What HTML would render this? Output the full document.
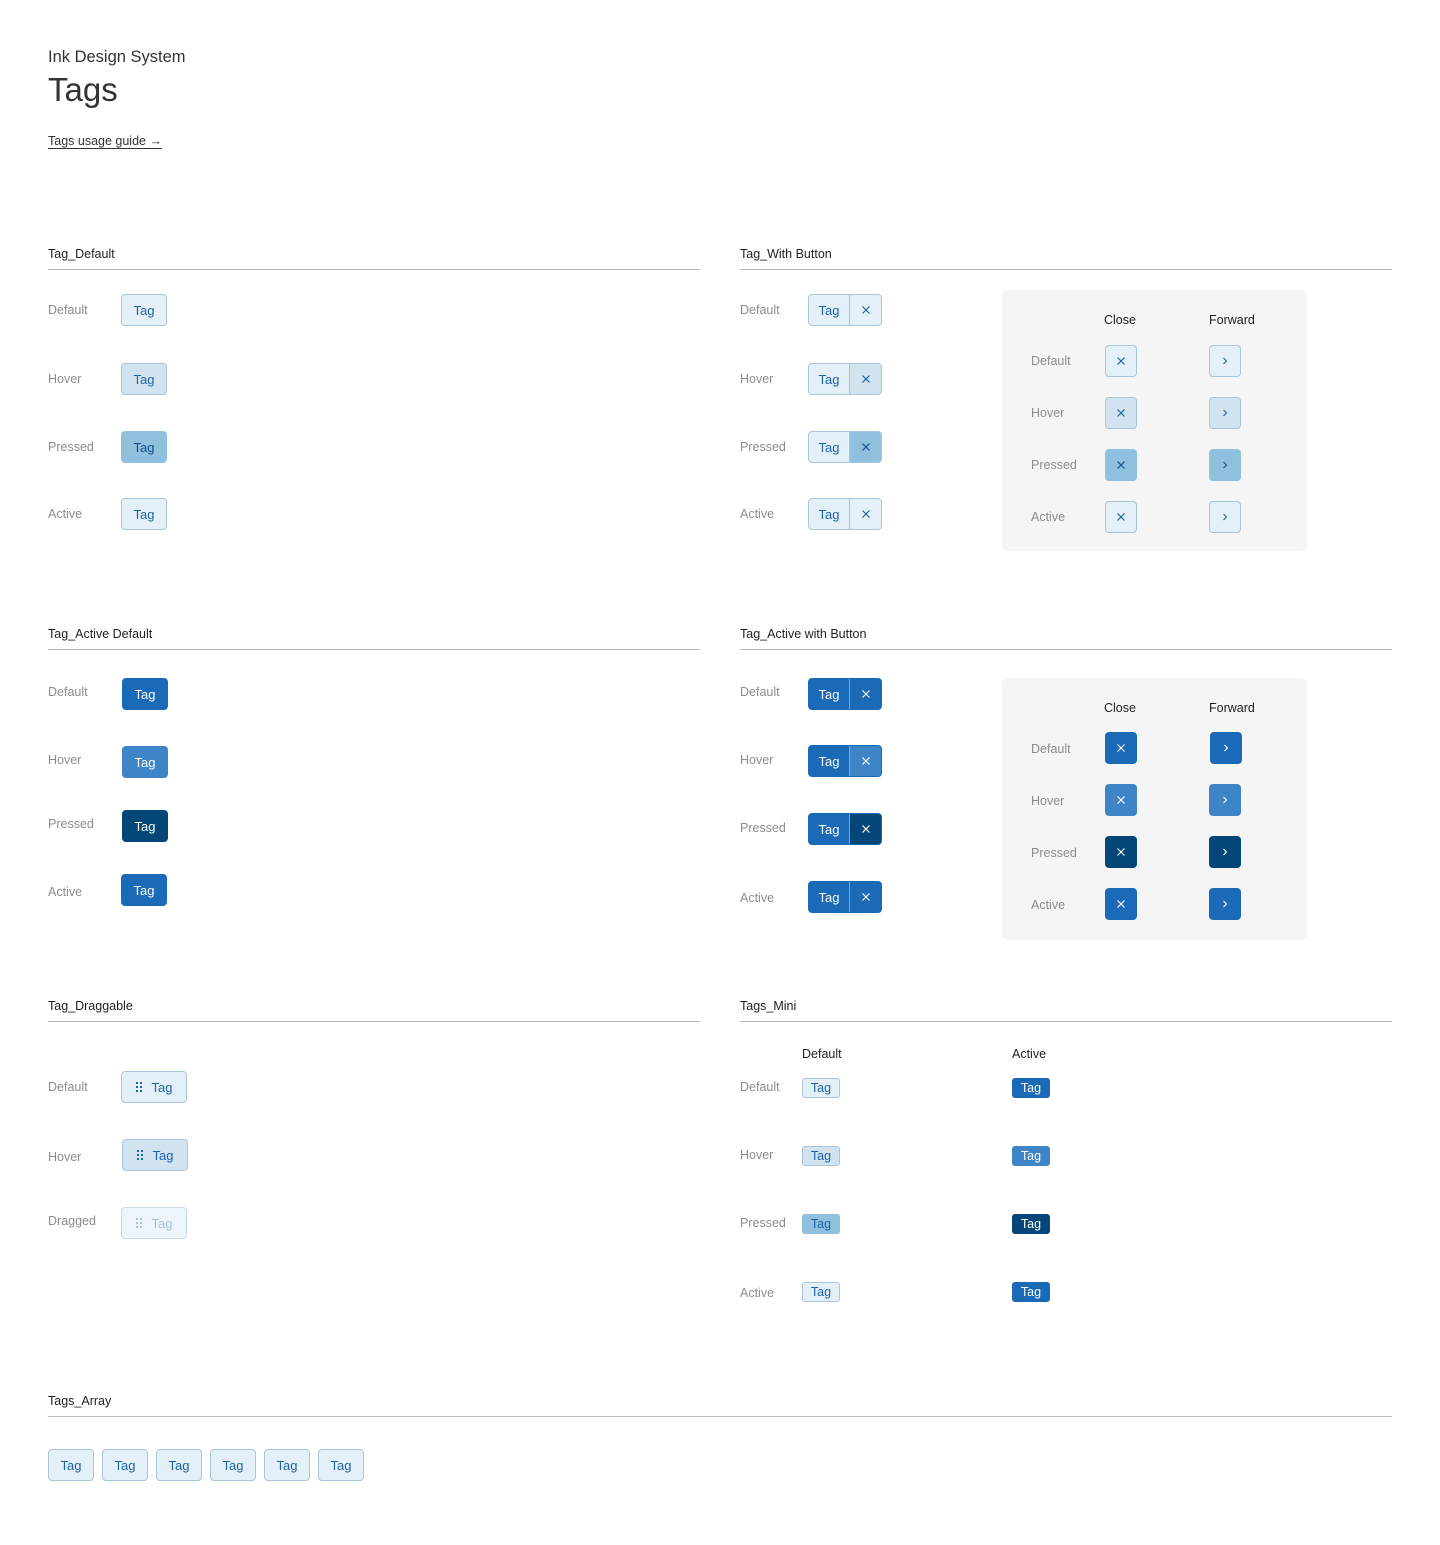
<!DOCTYPE html>
<html><head><meta charset="utf-8"><style>
*{margin:0;padding:0;box-sizing:border-box}
body{width:1440px;height:1545px;background:#fff;font-family:"Liberation Sans",sans-serif;position:relative;overflow:hidden}
.a{position:absolute}
.lbl{position:absolute;font-size:12.5px;color:#8c8c8c;line-height:16px}
.h{position:absolute;font-size:12.5px;color:#1f1f1f;line-height:16px}
.ln{position:absolute;height:1px;background:#bdbdbd}
.t{position:absolute;height:32px;border-radius:4px;border:1px solid #a9c6d8;background:#e4f0f7;color:#1d63a6;font-size:13px;display:flex;align-items:center;justify-content:center;line-height:1}
.t.hv{background:#d0e3ef}
.t.pr{background:#8fc0de;border-color:#8fc0de;color:#124f86}
.t.b{background:#1b6ab8;border-color:#1b6ab8;color:#fff}
.t.b.hv{background:#3d85c7;border-color:#3d85c7}
.t.b.pr{background:#044677;border-color:#044677;color:#fff}
.wb{position:absolute;height:32px;width:74px;border-radius:4px;border:1px solid #a9c6d8;background:#e4f0f7;display:flex;overflow:hidden;color:#1d63a6;font-size:13px}
.wb span{display:flex;align-items:center;justify-content:center;height:100%}
.wb .l{width:41px;border-right:1px solid #a9c6d8}
.wb .r{flex:1}
.wb.bb{background:#1b6ab8;border-color:#1b6ab8;color:#fff}
.wb.bb .l{border-right-color:#7aa9d6}
.ib{position:absolute;width:32px;height:32px;border-radius:4px;border:1px solid #a9c6d8;background:#e4f0f7;display:flex;align-items:center;justify-content:center}
.panel{position:absolute;background:#f5f5f5;border-radius:6px;width:305px}
.mini{position:absolute;height:20px;width:38px;border-radius:3px;border:1px solid #a9c6d8;background:#e4f0f7;color:#1d63a6;font-size:12.5px;display:flex;align-items:center;justify-content:center}
</style></head><body>
<div class="a" style="left:48px;top:48px;font-size:16.5px;color:#333">Ink Design System</div>
<div class="a" style="left:48px;top:71px;font-size:33px;color:#333">Tags</div>
<div class="a" style="left:48px;top:134px;font-size:12.5px;color:#333;text-decoration:underline;text-underline-offset:3px">Tags usage guide →</div>

<div class="h" style="left:48px;top:246px">Tag_Default</div><div class="ln" style="left:48px;top:269px;width:652px"></div>
<div class="h" style="left:740px;top:246px">Tag_With Button</div><div class="ln" style="left:740px;top:269px;width:652px"></div>
<div class="h" style="left:48px;top:626px">Tag_Active Default</div><div class="ln" style="left:48px;top:649px;width:652px"></div>
<div class="h" style="left:740px;top:626px">Tag_Active with Button</div><div class="ln" style="left:740px;top:649px;width:652px"></div>
<div class="h" style="left:48px;top:998px">Tag_Draggable</div><div class="ln" style="left:48px;top:1021px;width:652px"></div>
<div class="h" style="left:740px;top:998px">Tags_Mini</div><div class="ln" style="left:740px;top:1021px;width:652px"></div>
<div class="h" style="left:48px;top:1393px">Tags_Array</div><div class="ln" style="left:48px;top:1416px;width:1344px"></div>

<div class="lbl" style="left:48px;top:302px">Default</div><div class="t" style="left:121px;top:294px;width:46px">Tag</div>
<div class="lbl" style="left:48px;top:371px">Hover</div><div class="t hv" style="left:121px;top:363px;width:46px">Tag</div>
<div class="lbl" style="left:48px;top:439px">Pressed</div><div class="t pr" style="left:121px;top:431px;width:46px">Tag</div>
<div class="lbl" style="left:48px;top:506px">Active</div><div class="t" style="left:121px;top:498px;width:46px">Tag</div>

<div class="lbl" style="left:740px;top:302px">Default</div>
<div class="wb" style="left:808px;top:294px"><span class="l">Tag</span><span class="r"><svg width="10" height="10" viewBox="0 0 10 10"><path d="M1.5 1.5l7 7M8.5 1.5l-7 7" stroke="#1d63a6" stroke-width="1.2"/></svg></span></div>
<div class="lbl" style="left:740px;top:371px">Hover</div>
<div class="wb" style="left:808px;top:363px"><span class="l">Tag</span><span class="r" style="background:#d0e3ef"><svg width="10" height="10" viewBox="0 0 10 10"><path d="M1.5 1.5l7 7M8.5 1.5l-7 7" stroke="#1d63a6" stroke-width="1.2"/></svg></span></div>
<div class="lbl" style="left:740px;top:439px">Pressed</div>
<div class="wb" style="left:808px;top:431px"><span class="l">Tag</span><span class="r" style="background:#8fc0de"><svg width="10" height="10" viewBox="0 0 10 10"><path d="M1.5 1.5l7 7M8.5 1.5l-7 7" stroke="#124f86" stroke-width="1.2"/></svg></span></div>
<div class="lbl" style="left:740px;top:506px">Active</div>
<div class="wb" style="left:808px;top:498px"><span class="l">Tag</span><span class="r"><svg width="10" height="10" viewBox="0 0 10 10"><path d="M1.5 1.5l7 7M8.5 1.5l-7 7" stroke="#1d63a6" stroke-width="1.2"/></svg></span></div>

<div class="panel" style="left:1002px;top:290px;height:261px"></div>
<div class="h" style="left:1104px;top:312px">Close</div><div class="h" style="left:1209px;top:312px">Forward</div>
<div class="lbl" style="left:1031px;top:353px">Default</div>
<div class="ib" style="left:1105px;top:345px"><svg width="10" height="10" viewBox="0 0 10 10"><path d="M1.5 1.5l7 7M8.5 1.5l-7 7" stroke="#1d63a6" stroke-width="1.2"/></svg></div>
<div class="ib" style="left:1209px;top:345px"><svg width="6" height="8" viewBox="0 0 6 8"><path d="M1.5 1l3 3-3 3" fill="none" stroke="#1d63a6" stroke-width="1.1"/></svg></div>
<div class="lbl" style="left:1031px;top:405px">Hover</div>
<div class="ib" style="left:1105px;top:397px;background:#d0e3ef"><svg width="10" height="10" viewBox="0 0 10 10"><path d="M1.5 1.5l7 7M8.5 1.5l-7 7" stroke="#1d63a6" stroke-width="1.2"/></svg></div>
<div class="ib" style="left:1209px;top:397px;background:#d0e3ef"><svg width="6" height="8" viewBox="0 0 6 8"><path d="M1.5 1l3 3-3 3" fill="none" stroke="#1d63a6" stroke-width="1.1"/></svg></div>
<div class="lbl" style="left:1031px;top:457px">Pressed</div>
<div class="ib" style="left:1105px;top:449px;background:#8fc0de;border-color:#8fc0de"><svg width="10" height="10" viewBox="0 0 10 10"><path d="M1.5 1.5l7 7M8.5 1.5l-7 7" stroke="#124f86" stroke-width="1.2"/></svg></div>
<div class="ib" style="left:1209px;top:449px;background:#8fc0de;border-color:#8fc0de"><svg width="6" height="8" viewBox="0 0 6 8"><path d="M1.5 1l3 3-3 3" fill="none" stroke="#124f86" stroke-width="1.1"/></svg></div>
<div class="lbl" style="left:1031px;top:509px">Active</div>
<div class="ib" style="left:1105px;top:501px"><svg width="10" height="10" viewBox="0 0 10 10"><path d="M1.5 1.5l7 7M8.5 1.5l-7 7" stroke="#1d63a6" stroke-width="1.2"/></svg></div>
<div class="ib" style="left:1209px;top:501px"><svg width="6" height="8" viewBox="0 0 6 8"><path d="M1.5 1l3 3-3 3" fill="none" stroke="#1d63a6" stroke-width="1.1"/></svg></div>

<div class="lbl" style="left:48px;top:684px">Default</div><div class="t b" style="left:122px;top:678px;width:46px">Tag</div>
<div class="lbl" style="left:48px;top:752px">Hover</div><div class="t b hv" style="left:122px;top:746px;width:46px">Tag</div>
<div class="lbl" style="left:48px;top:816px">Pressed</div><div class="t b pr" style="left:122px;top:810px;width:46px">Tag</div>
<div class="lbl" style="left:48px;top:884px">Active</div><div class="t b" style="left:121px;top:874px;width:46px">Tag</div>

<div class="lbl" style="left:740px;top:684px">Default</div>
<div class="wb bb" style="left:808px;top:678px"><span class="l">Tag</span><span class="r"><svg width="10" height="10" viewBox="0 0 10 10"><path d="M1.5 1.5l7 7M8.5 1.5l-7 7" stroke="#fff" stroke-width="1.2"/></svg></span></div>
<div class="lbl" style="left:740px;top:752px">Hover</div>
<div class="wb bb" style="left:808px;top:745px"><span class="l">Tag</span><span class="r" style="background:#3d85c7"><svg width="10" height="10" viewBox="0 0 10 10"><path d="M1.5 1.5l7 7M8.5 1.5l-7 7" stroke="#fff" stroke-width="1.2"/></svg></span></div>
<div class="lbl" style="left:740px;top:820px">Pressed</div>
<div class="wb bb" style="left:808px;top:813px"><span class="l">Tag</span><span class="r" style="background:#044677"><svg width="10" height="10" viewBox="0 0 10 10"><path d="M1.5 1.5l7 7M8.5 1.5l-7 7" stroke="#fff" stroke-width="1.2"/></svg></span></div>
<div class="lbl" style="left:740px;top:890px">Active</div>
<div class="wb bb" style="left:808px;top:881px"><span class="l">Tag</span><span class="r"><svg width="10" height="10" viewBox="0 0 10 10"><path d="M1.5 1.5l7 7M8.5 1.5l-7 7" stroke="#fff" stroke-width="1.2"/></svg></span></div>

<div class="panel" style="left:1002px;top:678px;height:262px"></div>
<div class="h" style="left:1104px;top:700px">Close</div><div class="h" style="left:1209px;top:700px">Forward</div>
<div class="lbl" style="left:1031px;top:741px">Default</div>
<div class="ib" style="left:1105px;top:732px;background:#1b6ab8;border-color:#1b6ab8"><svg width="10" height="10" viewBox="0 0 10 10"><path d="M1.5 1.5l7 7M8.5 1.5l-7 7" stroke="#fff" stroke-width="1.2"/></svg></div>
<div class="ib" style="left:1210px;top:732px;background:#1b6ab8;border-color:#1b6ab8"><svg width="6" height="8" viewBox="0 0 6 8"><path d="M1.5 1l3 3-3 3" fill="none" stroke="#fff" stroke-width="1.1"/></svg></div>
<div class="lbl" style="left:1031px;top:793px">Hover</div>
<div class="ib" style="left:1105px;top:784px;background:#3d85c7;border-color:#3d85c7"><svg width="10" height="10" viewBox="0 0 10 10"><path d="M1.5 1.5l7 7M8.5 1.5l-7 7" stroke="#fff" stroke-width="1.2"/></svg></div>
<div class="ib" style="left:1209px;top:784px;background:#3d85c7;border-color:#3d85c7"><svg width="6" height="8" viewBox="0 0 6 8"><path d="M1.5 1l3 3-3 3" fill="none" stroke="#fff" stroke-width="1.1"/></svg></div>
<div class="lbl" style="left:1031px;top:845px">Pressed</div>
<div class="ib" style="left:1105px;top:836px;background:#044677;border-color:#044677"><svg width="10" height="10" viewBox="0 0 10 10"><path d="M1.5 1.5l7 7M8.5 1.5l-7 7" stroke="#fff" stroke-width="1.2"/></svg></div>
<div class="ib" style="left:1209px;top:836px;background:#044677;border-color:#044677"><svg width="6" height="8" viewBox="0 0 6 8"><path d="M1.5 1l3 3-3 3" fill="none" stroke="#fff" stroke-width="1.1"/></svg></div>
<div class="lbl" style="left:1031px;top:897px">Active</div>
<div class="ib" style="left:1105px;top:888px;background:#1b6ab8;border-color:#1b6ab8"><svg width="10" height="10" viewBox="0 0 10 10"><path d="M1.5 1.5l7 7M8.5 1.5l-7 7" stroke="#fff" stroke-width="1.2"/></svg></div>
<div class="ib" style="left:1209px;top:888px;background:#1b6ab8;border-color:#1b6ab8"><svg width="6" height="8" viewBox="0 0 6 8"><path d="M1.5 1l3 3-3 3" fill="none" stroke="#fff" stroke-width="1.1"/></svg></div>

<div class="lbl" style="left:48px;top:1079px">Default</div>
<div class="t" style="left:121px;top:1071px;width:66px;gap:10px"><svg width="6" height="10" viewBox="0 0 6 10"><g fill="#1d63a6"><rect x="0" y="0" width="2" height="2"/><rect x="4" y="0" width="2" height="2"/><rect x="0" y="4" width="2" height="2"/><rect x="4" y="4" width="2" height="2"/><rect x="0" y="8" width="2" height="2"/><rect x="4" y="8" width="2" height="2"/></g></svg>Tag</div>
<div class="lbl" style="left:48px;top:1149px">Hover</div>
<div class="t hv" style="left:122px;top:1139px;width:66px;gap:10px"><svg width="6" height="10" viewBox="0 0 6 10"><g fill="#1d63a6"><rect x="0" y="0" width="2" height="2"/><rect x="4" y="0" width="2" height="2"/><rect x="0" y="4" width="2" height="2"/><rect x="4" y="4" width="2" height="2"/><rect x="0" y="8" width="2" height="2"/><rect x="4" y="8" width="2" height="2"/></g></svg>Tag</div>
<div class="lbl" style="left:48px;top:1213px">Dragged</div>
<div class="t" style="left:121px;top:1207px;width:66px;gap:10px;background:#eef5fa;border-color:#c8dbe7;color:#a6c3d9"><svg width="6" height="10" viewBox="0 0 6 10"><g fill="#a6c3d9"><rect x="0" y="0" width="2" height="2"/><rect x="4" y="0" width="2" height="2"/><rect x="0" y="4" width="2" height="2"/><rect x="4" y="4" width="2" height="2"/><rect x="0" y="8" width="2" height="2"/><rect x="4" y="8" width="2" height="2"/></g></svg>Tag</div>

<div class="h" style="left:802px;top:1046px">Default</div><div class="h" style="left:1012px;top:1046px">Active</div>
<div class="lbl" style="left:740px;top:1079px">Default</div>
<div class="mini" style="left:802px;top:1078px">Tag</div>
<div class="mini" style="left:1012px;top:1078px;background:#1b6ab8;border-color:#1b6ab8;color:#fff">Tag</div>
<div class="lbl" style="left:740px;top:1147px">Hover</div>
<div class="mini" style="left:802px;top:1146px;background:#d0e3ef">Tag</div>
<div class="mini" style="left:1012px;top:1146px;background:#3d85c7;border-color:#3d85c7;color:#fff">Tag</div>
<div class="lbl" style="left:740px;top:1215px">Pressed</div>
<div class="mini" style="left:802px;top:1214px;background:#8fc0de;border-color:#8fc0de">Tag</div>
<div class="mini" style="left:1012px;top:1214px;background:#044677;border-color:#044677;color:#fff">Tag</div>
<div class="lbl" style="left:740px;top:1285px">Active</div>
<div class="mini" style="left:802px;top:1282px">Tag</div>
<div class="mini" style="left:1012px;top:1282px;background:#1b6ab8;border-color:#1b6ab8;color:#fff">Tag</div>

<div class="t" style="left:48px;top:1449px;width:46px">Tag</div>
<div class="t" style="left:102px;top:1449px;width:46px">Tag</div>
<div class="t" style="left:156px;top:1449px;width:46px">Tag</div>
<div class="t" style="left:210px;top:1449px;width:46px">Tag</div>
<div class="t" style="left:264px;top:1449px;width:46px">Tag</div>
<div class="t" style="left:318px;top:1449px;width:46px">Tag</div>
</body></html>
